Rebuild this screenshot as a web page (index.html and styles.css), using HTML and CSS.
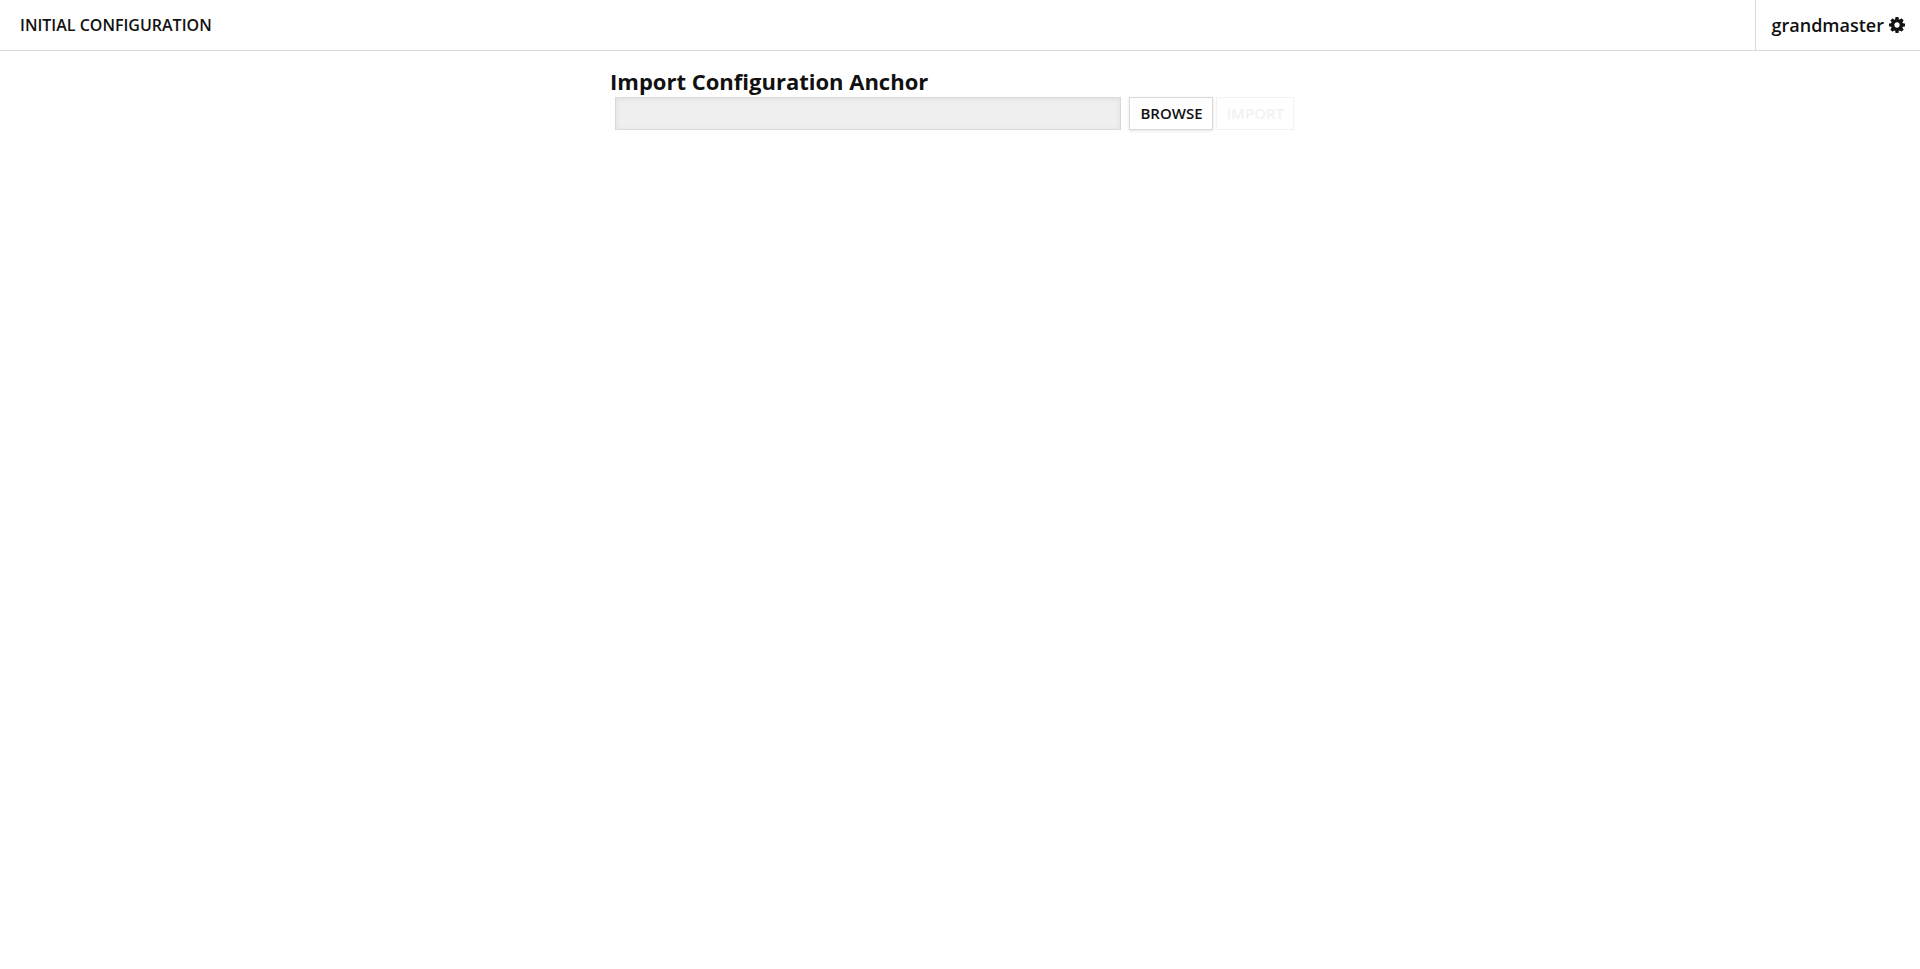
FILE: index.html
```html
<!DOCTYPE html>
<html lang="en">
<head>
<meta charset="utf-8">
<title>Initial Configuration</title>
<link rel="stylesheet" href="styles.css">
</head>
<body>
<header class="topbar">
  <h1 class="page-title">INITIAL CONFIGURATION</h1>
  <button class="user-menu" type="button">
    <span>grandmaster</span>
    <svg class="gear" viewBox="0 0 1536 1536" aria-hidden="true"><path fill="currentColor" d="M1024 768q0-106-75-181t-181-75-181 75-75 181 75 181 181 75 181-75 75-181zm512-109v222q0 12-8 23t-20 13l-185 28q-19 54-39 91 35 50 107 138 10 12 10 25t-9 23q-27 37-99 108t-94 71q-12 0-26-9l-138-108q-44 23-91 38-16 136-29 186-7 28-36 28h-222q-14 0-24.500-8.500t-11.500-21.500l-28-184q-49-16-90-37l-141 107q-10 9-25 9-14 0-25-11-126-114-165-168-7-10-7-23 0-12 8-23 15-21 51-66.500t54-70.500q-27-50-41-99l-183-27q-13-2-21-12.500t-8-23.500v-222q0-12 8-23t19-13l186-28q14-46 39-92-40-57-107-138-10-12-10-24 0-10 9-23 26-36 98.500-107.500t94.500-71.500q13 0 26 10l138 107q44-23 91-38 16-136 29-186 7-28 36-28h222q14 0 24.500 8.500t11.500 21.500l28 184q49 16 90 37l142-107q9-9 24-9 13 0 25 10 129 119 165 170 7 8 7 22 0 12-8 23-15 21-51 66.500t-54 70.500q26 50 41 98l183 28q13 2 21 12.500t8 23.500z"/></svg>
  </button>
</header>
<main class="content">
  <form class="import-form">
    <label class="form-title" for="anchor-file">Import Configuration Anchor</label>
    <div class="form-row">
      <input class="file-name" id="anchor-file" type="text" disabled>
      <div class="actions">
        <button class="button" type="button">BROWSE</button>
        <button class="button" type="submit" disabled>IMPORT</button>
      </div>
    </div>
  </form>
</main>
</body>
</html>
```
FILE: styles.css
```css
* {
  box-sizing: border-box;
}

body {
  margin: 0;
  background: #fff;
  color: #111;
  font-family: "Open Sans", sans-serif;
  font-size: 16px;
}

.topbar {
  display: flex;
  justify-content: space-between;
  align-items: stretch;
  border-bottom: 1px solid #d9d9d9;
}

.page-title {
  margin: 0;
  padding: 0 20px;
  font-size: 16px;
  font-weight: 600;
  line-height: 50px;
}

.user-menu {
  display: flex;
  align-items: center;
  gap: 5px;
  padding: 0 15px 0 16px;
  border: 0;
  border-left: 1px solid #d9d9d9;
  background: none;
  color: inherit;
  font: 600 18px/50px "Open Sans", sans-serif;
  cursor: pointer;
}

.gear {
  width: 16px;
  height: 16px;
}

.content {
  padding: 16px 20px;
}

.import-form {
  width: 100%;
  max-width: 700px;
  margin: 0 auto;
}

.form-title {
  display: block;
  padding-bottom: 2px;
  font-size: 22px;
  font-weight: 700;
  line-height: 28px;
}

.form-row {
  display: flex;
  gap: 8px;
  padding: 0 16px 0 5px;
}

.file-name {
  flex: 1;
  min-width: 0;
  height: 33px;
  padding: 0 8px;
  border: 1px solid #d9d9d9;
  background: #efefef;
  box-shadow: inset 0 1px 4px #ddd;
  font: inherit;
}

.actions {
  display: flex;
  gap: 3px;
}

.button {
  height: 33px;
  padding: 0 9px 2px 10px;
  border: 1px solid #d9d9d9;
  background: #fff;
  box-shadow: 0 1px 3px #e5e5e5;
  color: #111;
  font: 600 15px/20px "Open Sans", sans-serif;
  cursor: pointer;
}

.button:disabled {
  border-color: #f2f2f2;
  box-shadow: none;
  color: #f2f2f2;
  cursor: default;
}
```
